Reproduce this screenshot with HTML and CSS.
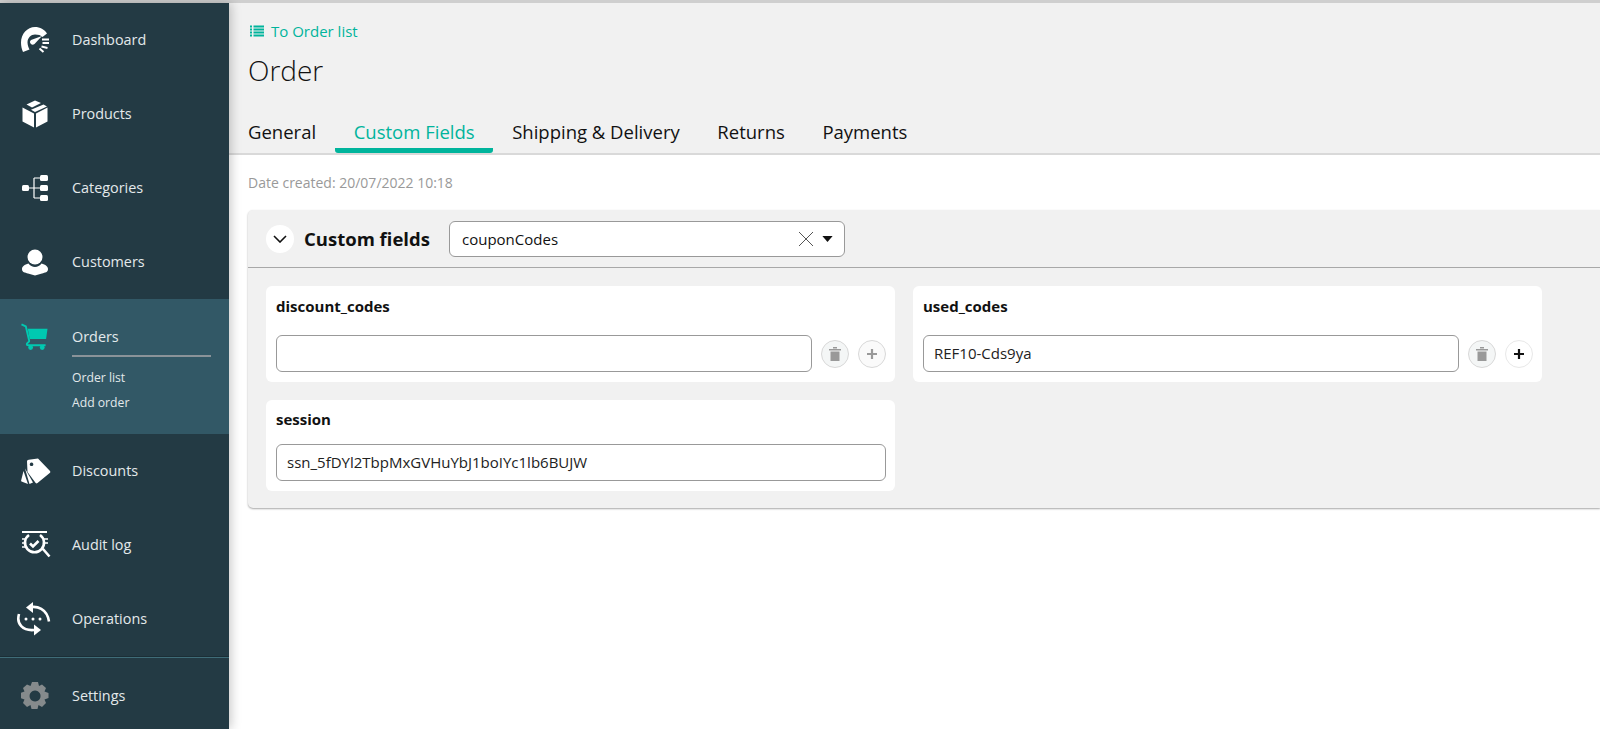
FILE: index.html
```html
<!DOCTYPE html>
<html lang="en">
<head>
<meta charset="utf-8">
<title>Order</title>
<link rel="stylesheet" href="styles.css">
</head>
<body>
<div class="app">
  <nav class="sidebar">
    <a class="nav-item">
      <span class="nav-icon"><svg viewBox="0 0 28 26" width="28" height="26"><path class="w" d="M2 25C.7 22 0 19 0 15.500 0 7 6.300 0 14 0c5 0 9.500 2.500 12 6.500l-4.500 3.500C20 8.300 17.300 7.500 14 7.500c-4 0-7.500 3.500-7.500 8 0 2.500 1 5 2 7z"/><path class="w" d="M10 13l11-4-7.500 8a2.500 2.500 0 0 1-3.500-4z"/><path class="ws" d="M21 12.500h7M21.500 16h6.500M20.500 19.500l6 1.500M18.500 21.500l4 3.500"/></svg></span>
      <span class="nav-label">Dashboard</span>
    </a>
    <a class="nav-item">
      <span class="nav-icon"><svg viewBox="0 0 28 28" width="28" height="28"><path class="w" d="M14 .500l6 2.500-9 4.500-5.500-3zM22.500 4.500l3.500 2-12 5.500-4-2.200zM1.500 7.500l11.500 6v14l-11.500-6zM26.500 7.500v14l-11.500 6v-14z"/></svg></span>
      <span class="nav-label">Products</span>
    </a>
    <a class="nav-item">
      <span class="nav-icon"><svg viewBox="0 0 28 28" width="28" height="28"><rect class="w" x="1" y="11" width="7" height="6" rx="1.500"/><rect class="w" x="19" y="1" width="8" height="6" rx="1.500"/><rect class="w" x="19" y="11" width="8" height="6" rx="1.500"/><rect class="w" x="19" y="21" width="8" height="6" rx="1.500"/><path class="wt" d="M8 14h11M13 4v20M13 4h6M13 24h6"/></svg></span>
      <span class="nav-label">Categories</span>
    </a>
    <a class="nav-item">
      <span class="nav-icon"><svg viewBox="0 0 28 28" width="28" height="28"><circle class="w" cx="14" cy="9" r="7.500"/><path class="w" d="M7.500 15.500C3.500 16.500 1 18.500 1 21c0 3.500 3 3.500 6 4.500l7 2 7-2c3-1 6-1 6-4.500 0-2.500-2.500-4.500-6.500-5.500-1.500 2-4 3.500-6.500 3.500s-5-1.500-6.500-3.500z"/></svg></span>
      <span class="nav-label">Customers</span>
    </a>
    <div class="nav-group">
      <a class="nav-item nav-item-open">
        <span class="nav-icon"><svg viewBox="0 0 28 28" width="27" height="27"><path class="t" d="M7 6h20.500l-1.500 10.500H9z"/><path class="ts" d="M0.500 1.500l4.500 2 3.500 15c.3 1.500-2.500 2-2.500 3.500 0 .8.800 1 1.500 1h18"/><circle class="t" cx="10" cy="25.500" r="2.500"/><circle class="t" cx="22" cy="25.500" r="2.500"/></svg></span>
        <span class="nav-label nav-label-open">Orders</span>
      </a>
      <div class="subnav">
        <a class="subnav-item">Order list</a>
        <a class="subnav-item">Add order</a>
      </div>
    </div>
    <a class="nav-item">
      <span class="nav-icon"><svg viewBox="0 0 30 26" width="30" height="26"><path class="w" fill-rule="evenodd" d="M6 3.500c0-1 .8-1.700 1.700-1.800L17 .500 29 13c.5.600.5 1.200 0 1.700L16.500 25c-.6.500-1.300.5-1.800 0L6.500 14zM10.500 4.500a1.800 1.800 0 1 0 .1 0z"/><path class="w" d="M4 10.500l8 14-3.500 1.500z"/><path class="w" d="M2.500 13l4.500 13-6.500-2.500c-.4-.2-.5-.6-.4-1z"/></svg></span>
      <span class="nav-label">Discounts</span>
    </a>
    <a class="nav-item">
      <span class="nav-icon"><svg viewBox="0 0 30 30" width="30" height="30"><path class="ws" d="M1 2h25"/><path class="wm" d="M8 5a9.500 9.500 0 1 0 11 0M22 19l6.500 7.500"/><path class="wm" d="M9 13.500l3 3 5.500-5.500"/><path class="wd" d="M1 9h4M1 13h3M1 17h4M23 9h4M24 13h3"/></svg></span>
      <span class="nav-label">Audit log</span>
    </a>
    <a class="nav-item">
      <span class="nav-icon nav-icon-wide"><svg viewBox="0 0 36 34" width="36" height="34"><path class="wm" d="M13 5.500c8-2 18 1 20 14"/><path class="w" d="M17 0v11L10 5.500z"/><path class="wm" d="M3 12c-3 10 4 17 15 16"/><path class="w" d="M18 22.500v11l7-5.500z"/><circle class="w" cx="10" cy="17" r="1.500"/><circle class="w" cx="17" cy="17" r="1.500"/><circle class="w" cx="24" cy="17" r="1.500"/></svg></span>
      <span class="nav-label">Operations</span>
    </a>
    <div class="sidebar-rule"></div>
    <a class="nav-item nav-item-settings">
      <span class="nav-icon"><svg viewBox="0 0 28 28" width="28" height="28"><path class="g" fill-rule="evenodd" d="M11 0h6l1 4 3-1.500 4 3.500-1.500 3.500 4 1.500v5l-4 1.500 1.500 3.500-4 4-3.500-2-1 4h-6l-1-4-3.500 2-4-4 1.500-3.500-4-1.500v-5l4-1.500-1.500-3.500 4-3.500 3.500 1.500zM14 8.500a5.500 5.500 0 1 0 .1 0z"/></svg></span>
      <span class="nav-label">Settings</span>
    </a>
  </nav>

  <main class="main">
    <header class="page-head">
      <a class="back-link">
        <svg viewBox="0 0 14 12" width="14" height="12"><path class="list-lines" d="M0 1.500h2M3.500 1.500H14M0 4.500h2M3.500 4.500H14M0 7.500h2M3.500 7.500H14M0 10.500h2M3.500 10.500H14"/></svg>
        <span>To Order list</span>
      </a>
      <h1 class="page-title">Order</h1>
      <div class="tabs">
        <a class="tab">General</a>
        <a class="tab tab-active">Custom Fields</a>
        <a class="tab">Shipping &amp; Delivery</a>
        <a class="tab">Returns</a>
        <a class="tab">Payments</a>
      </div>
    </header>
    <div class="page-body">
      <p class="date">Date created: 20/07/2022 10:18</p>
      <section class="panel">
        <div class="panel-head">
          <button class="collapse"><svg viewBox="0 0 14 8" width="14" height="8"><path class="chev" d="M1 1l6 6 6-6"/></svg></button>
          <h2 class="panel-title">Custom fields</h2>
          <div class="select">
            <span class="select-value">couponCodes</span>
            <svg class="select-x" viewBox="0 0 16 16" width="16" height="16"><path class="x-line" d="M1 1l14 14M15 1L1 15"/></svg>
            <svg class="select-caret" viewBox="0 0 12 7" width="11" height="6"><path d="M0 0h12L6 7z"/></svg>
          </div>
        </div>
        <div class="cards">
          <div class="card">
            <div class="card-label">discount_codes</div>
            <div class="field-row">
              <div class="input"></div>
              <button class="round round-muted"><svg viewBox="0 0 12 14" width="12" height="14"><path class="trash" d="M0 2h12v1.500H0zM4 0h4v1.500H4zM1.500 4.500h9V14h-9z"/></svg></button>
              <button class="round round-off"><svg viewBox="0 0 10 10" width="10" height="10"><path class="plus-off" d="M5 0v10M0 5h10"/></svg></button>
            </div>
          </div>
          <div class="card">
            <div class="card-label">used_codes</div>
            <div class="field-row">
              <div class="input">REF10-Cds9ya</div>
              <button class="round round-muted"><svg viewBox="0 0 12 14" width="12" height="14"><path class="trash" d="M0 2h12v1.500H0zM4 0h4v1.500H4zM1.500 4.500h9V14h-9z"/></svg></button>
              <button class="round round-on"><svg viewBox="0 0 10 10" width="10" height="10"><path class="plus-on" d="M5 0v10M0 5h10"/></svg></button>
            </div>
          </div>
          <div class="card card-single">
            <div class="card-label">session</div>
            <div class="input">ssn_5fDYl2TbpMxGVHuYbJ1boIYc1lb6BUJW</div>
          </div>
        </div>
      </section>
    </div>
  </main>
</div>
</body>
</html>
```
FILE: styles.css
```css
* { box-sizing: border-box; }
html, body { height: 100%; }
body {
  margin: 0;
  overflow: hidden;
  background: #fff;
  font-family: "Open Sans", "Liberation Sans", sans-serif;
  color: #111;
}
.app {
  display: flex;
  height: 729px;
  border-top: 3px solid #cfcfcf;
}
.sidebar {
  flex: 0 0 229px;
  width: 229px;
  background: #233a44;
  display: flex;
  flex-direction: column;
  position: relative;
  z-index: 2;
  box-shadow: 2px 0 10px rgba(0, 0, 0, .22);
}
.nav-item {
  height: 74px;
  flex: 0 0 74px;
  display: flex;
  align-items: center;
  padding-left: 21px;
  color: #e3e9eb;
  font-size: 14.4px;
}
.nav-icon {
  flex: 0 0 51px;
  display: flex;
  align-items: center;
}
.nav-icon-wide { margin-left: -5px; flex-basis: 56px; }
.nav-label { margin-bottom: 2px; }
.nav-group {
  height: 135px;
  flex: 0 0 135px;
  background: #325866;
}
.nav-item-open { height: 58px; flex-basis: 58px; padding-top: 16px; }
.nav-label-open {
  flex: 0 0 139px;
  margin-top: 12px;
  margin-bottom: 0;
  padding-bottom: 9px;
  line-height: 19px;
  border-bottom: 2px solid #8a9399;
}
.subnav {
  display: flex;
  flex-direction: column;
  gap: 5px;
  padding: 11px 0 0 72px;
}
.subnav-item {
  font-size: 12.2px;
  line-height: 20px;
  color: #e3e9eb;
}
.sidebar-rule {
  height: 2px;
  flex: 0 0 2px;
  background: linear-gradient(#1b2e36 50%, #3f6c78 50%);
}
.nav-item-settings { height: 76px; flex-basis: 76px; }

.w { fill: #fff; }
.g { fill: #858a8c; }
.t { fill: #00c9b1; }
.ws { fill: none; stroke: #fff; stroke-width: 2; }
.wm { fill: none; stroke: #fff; stroke-width: 2.600; }
.wt { fill: none; stroke: #fff; stroke-width: 1.200; }
.wd { fill: none; stroke: #fff; stroke-width: 1.500; }
.ts { fill: none; stroke: #00c9b1; stroke-width: 2; }

.main {
  flex: 1;
  min-width: 0;
  position: relative;
  display: flex;
  flex-direction: column;
}
.page-head {
  height: 152px;
  flex: 0 0 152px;
  background: #f1f1f1;
  border-bottom: 2px solid #d9d9d9;
  padding: 18px 0 0 19px;
  display: flex;
  flex-direction: column;
}
.back-link {
  display: flex;
  align-items: center;
  gap: 7px;
  margin-left: 2px;
  height: 20px;
  font-size: 15px;
  color: #00b49c;
}
.list-lines { fill: none; stroke: #00b49c; stroke-width: 2; }
.page-title {
  margin: 10px 0 0;
  font-size: 28px;
  font-weight: 300;
  line-height: 38px;
  color: #111;
}
.tabs {
  display: flex;
  margin: 24px 0 0 -18.8px;
}
.tab {
  display: block;
  height: 40px;
  padding: 6px 18.8px 0;
  font-size: 18.5px;
  line-height: 26px;
  color: #111;
  border-bottom: 5px solid transparent;
  border-radius: 0 0 3px 3px;
}
.tab-active {
  color: #00b49c;
  border-bottom-color: #00b49c;
}
.page-body {
  flex: 1;
  padding-left: 19px;
}
.date {
  margin: 0;
  padding-top: 18px;
  height: 55px;
  font-size: 14px;
  line-height: 20px;
  color: #999;
}
.panel {
  background: #f1f1f1;
  border-radius: 5px 0 0 5px;
  box-shadow: 0 1px 2px rgba(0, 0, 0, .35);
  padding-bottom: 17px;
}
.panel-head {
  height: 58px;
  display: flex;
  align-items: center;
  padding: 0 0 0 18px;
  border-bottom: 1px solid #a8a8a8;
}
.collapse {
  width: 28px;
  height: 28px;
  padding: 0;
  border: 0;
  border-radius: 50%;
  background: #fff;
  display: flex;
  align-items: center;
  justify-content: center;
}
.chev { fill: none; stroke: #111; stroke-width: 1.600; }
.panel-title {
  margin: 0 0 0 10px;
  width: 145px;
  font-size: 18.5px;
  font-weight: 700;
  line-height: 24px;
}
.select {
  width: 396px;
  height: 36px;
  background: #fff;
  border: 1px solid #999;
  border-radius: 6px;
  display: flex;
  align-items: center;
  padding: 0 11px 0 12px;
  font-size: 15px;
}
.select-value { flex: 1; }
.select-x { margin-right: 8px; }
.x-line { fill: none; stroke: #555; stroke-width: 1; }
.select-caret { fill: #111; }
.cards {
  display: grid;
  grid-template-columns: 629px 629px;
  gap: 18px;
  padding: 18px 0 0 18px;
}
.card {
  background: #fff;
  border-radius: 6px;
  padding: 10px 9px 10px 10px;
  height: 96px;
}
.card-single { height: 91px; padding-top: 9px; }
.card-label {
  font-size: 15px;
  font-weight: 700;
  line-height: 20px;
  height: 39px;
  color: #111;
}
.card-single .card-label { height: 35px; }
.field-row {
  display: flex;
  align-items: center;
}
.input {
  flex: 1;
  height: 37px;
  background: #fff;
  border: 1px solid #999;
  border-radius: 6px;
  padding: 0 10px;
  font-size: 15px;
  line-height: 35px;
  color: #222;
}
.round {
  flex: 0 0 28px;
  width: 28px;
  height: 28px;
  padding: 0;
  border-radius: 50%;
  display: flex;
  align-items: center;
  justify-content: center;
  border: 1px solid #d8d8d8;
  margin-left: 9px;
}
.round-muted { background: #f4f6f6; }
.round-off { background: #fafafa; margin-right: 0; }
.round-on { background: #fff; border-color: #e8e8e8; }
.trash { fill: #999; }
.plus-off { fill: none; stroke: #999; stroke-width: 2.200; }
.plus-on { fill: none; stroke: #111; stroke-width: 2.200; }
```
